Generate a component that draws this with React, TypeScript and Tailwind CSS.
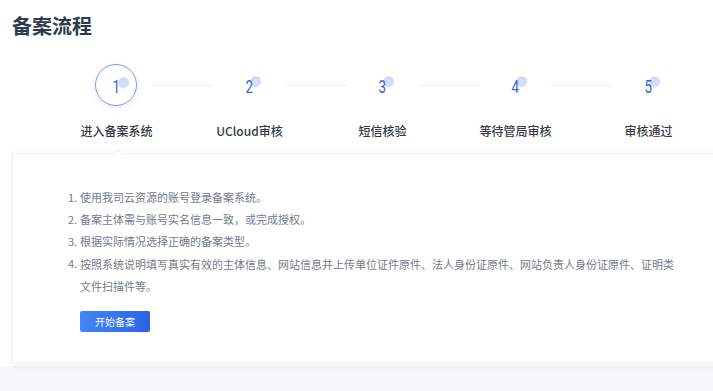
import React from 'react';

const steps = ['进入备案系统', 'UCloud审核', '短信核验', '等待管局审核', '审核通过'];

const notes = [
  '使用我司云资源的账号登录备案系统。',
  '备案主体需与账号实名信息一致，或完成授权。',
  '根据实际情况选择正确的备案类型。',
  '按照系统说明填写真实有效的主体信息、网站信息并上传单位证件原件、法人身份证原件、网站负责人身份证原件、证明类文件扫描件等。',
];

const cjk = { fontFamily: '"Noto Sans CJK SC", "Noto Sans", sans-serif' };

const StepMark: React.FC<{ n: number; active?: boolean }> = ({ n, active }) => (
  <div
    className={`relative w-[42px] h-[42px] shrink-0 rounded-full flex items-center justify-center ${
      active ? 'border border-[#7f9be3] bg-white shadow-[0_2px_6px_rgba(90,120,210,0.12)]' : ''
    }`}
  >
    <span className="absolute left-[22px] top-[12px] w-[12px] h-[12px] rounded-full bg-[radial-gradient(circle_at_45%_45%,#d9e0fa,#cfd8f6_45%,rgba(230,234,252,0)_75%)]"></span>
    <span
      className="relative text-[19px] leading-none text-[#3a62d4] font-normal scale-x-[0.7] mt-[3px]"
      style={{ fontFamily: 'Roboto, sans-serif' }}
    >
      {n}
    </span>
  </div>
);

export default function App() {
  return (
    <div className="w-[713px] h-[391px] overflow-hidden bg-white flex flex-col" style={cjk}>
      {/* Title */}
      <h1 className="pl-[12px] pt-[12px] text-[20px] leading-[28px] font-bold text-[#2e3a4f]">备案流程</h1>

      {/* Steps */}
      <div className="flex items-center pl-[95px] mt-[24px]">
        {steps.map((_, i) => (
          <React.Fragment key={i}>
            <StepMark n={i + 1} active={i === 0} />
            {i < steps.length - 1 && <div className="w-[61px] h-px mx-[15px] bg-[#eceef3] shrink-0"></div>}
          </React.Fragment>
        ))}
      </div>
      <div className="flex pl-[50px] mt-[16px]">
        {steps.map((s) => (
          <div key={s} className="w-[133px] shrink-0 text-center text-[12px] leading-[18px] font-medium text-[#333a45]">
            {s}
          </div>
        ))}
      </div>

      {/* Panel */}
      <div className="relative ml-[12px] mt-[13px] w-[720px] h-[211px] shrink-0 bg-white border border-[#eef0f4] shadow-[0_2px_8px_rgba(30,40,70,0.05)] pl-[55px] pt-[36px]">
        <span className="absolute -top-[4px] left-[101px] w-[7px] h-[7px] rotate-45 bg-white border-l border-t border-[#eef0f4]"></span>
        <ol className="flex flex-col gap-[7px] text-[11px] leading-[15px] text-[#737b8b]">
          {notes.map((t, i) => (
            <li key={i} className="flex">
              <span className="w-[12px] shrink-0">{i + 1}.</span>
              <span className={`w-[600px] ${i === 3 ? 'leading-[22px] -mt-[3px]' : ''}`}>{t}</span>
            </li>
          ))}
        </ol>
        <button className="mt-[14px] ml-[12px] w-[70px] h-[21px] rounded-[2px] bg-gradient-to-r from-[#4287f7] to-[#2b63e6] text-white text-[10px] leading-[21px] text-center">
          开始备案
        </button>
      </div>
      <div className="flex-1 bg-[#f6f7f9] mt-[2px]"></div>
    </div>
  );
}
